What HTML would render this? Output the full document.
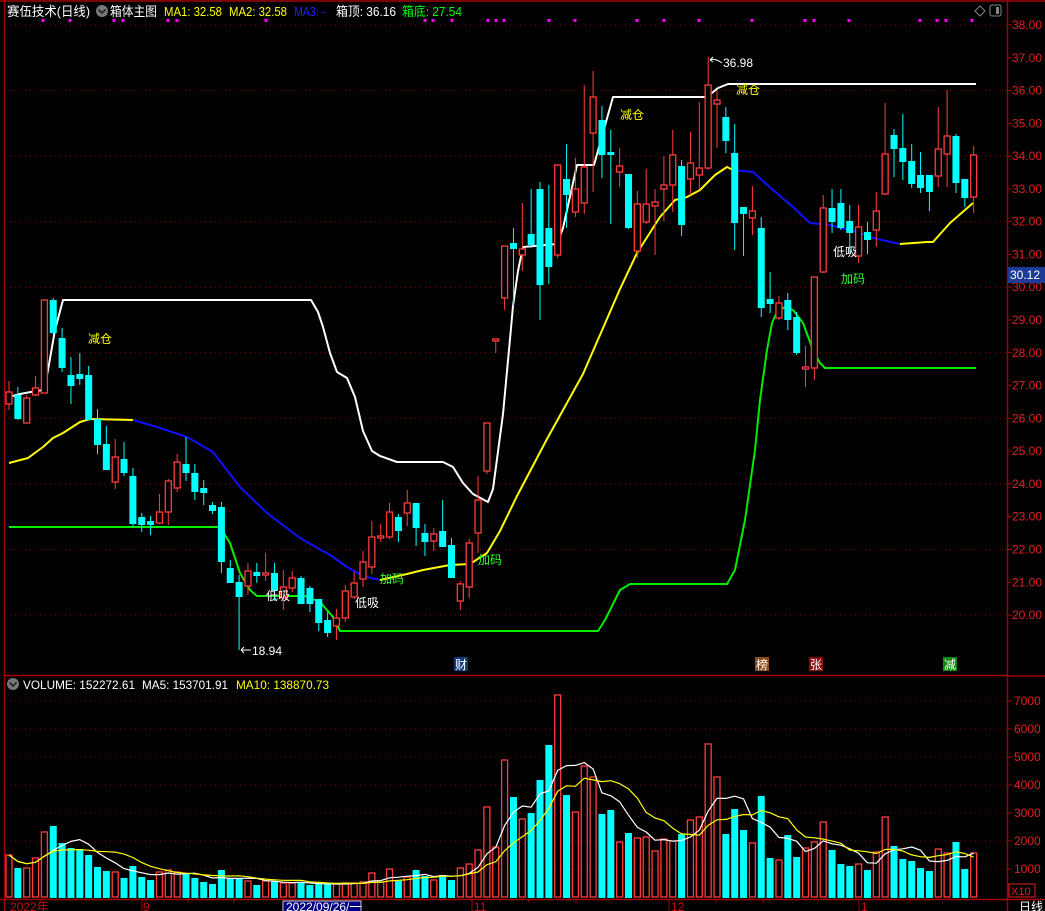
<!DOCTYPE html>
<html><head><meta charset="utf-8">
<style>
html,body{margin:0;padding:0;background:#000;width:1045px;height:911px;overflow:hidden}
svg{display:block}
text{font-family:"Liberation Sans","Noto Sans CJK SC",sans-serif}
</style></head>
<body>
<svg id="s" width="1045" height="911" viewBox="0 0 1045 911" xmlns="http://www.w3.org/2000/svg">
<rect width="1045" height="911" fill="#000"/>
<g id="grid"></g>
<g stroke="#a00000" stroke-width="1.5" fill="none">
<line x1="0" y1="1" x2="1045" y2="1"/>
<line x1="4.5" y1="0" x2="4.5" y2="911"/>
<line x1="4" y1="675.5" x2="1007" y2="675.5"/>
<line x1="1007.5" y1="0" x2="1007.5" y2="911"/>
<line x1="0" y1="899.5" x2="1045" y2="899.5"/>
<line x1="1007" y1="676" x2="1045" y2="676"/>
</g>
<g id="draw"></g>
<g font-size="13">
<text x="7" y="16" fill="#fff" textLength="83" lengthAdjust="spacingAndGlyphs">赛伍技术(日线)</text>
<circle cx="102" cy="11" r="6" fill="#777"/>
<path d="M98.5 9.5 L102 13 L105.5 9.5" stroke="#222" stroke-width="1.6" fill="none"/>
<text x="110" y="16" fill="#fff" textLength="47" lengthAdjust="spacingAndGlyphs">箱体主图</text>
<text x="164" y="16" fill="#ffff00" textLength="58" lengthAdjust="spacingAndGlyphs">MA1: 32.58</text>
<text x="229" y="16" fill="#ffff00" textLength="58" lengthAdjust="spacingAndGlyphs">MA2: 32.58</text>
<text x="294" y="16" fill="#2020ff" textLength="31" lengthAdjust="spacingAndGlyphs">MA3: -</text>
<text x="336" y="16" fill="#fff" textLength="60" lengthAdjust="spacingAndGlyphs">箱顶: 36.16</text>
<text x="402" y="16" fill="#00ff00" textLength="60" lengthAdjust="spacingAndGlyphs">箱底: 27.54</text>
</g>
<path d="M980 6 L985 11 L980 16 L975 11 Z" stroke="#888" fill="none"/>
<rect x="990" y="5" width="11" height="11" rx="2" stroke="#888" fill="none"/>
<rect x="996" y="7" width="3" height="7" fill="#888"/>
<g font-size="12">
<text x="88" y="343" fill="#ffff00">减仓</text>
<text x="620" y="119" fill="#ffff00">减仓</text>
<text x="736" y="94" fill="#ffff00">减仓</text>
<text x="266" y="600" fill="#fff">低吸</text>
<text x="355" y="607" fill="#fff">低吸</text>
<text x="833" y="256" fill="#fff">低吸</text>
<text x="380" y="583" fill="#33ff33">加码</text>
<text x="478" y="564" fill="#33ff33">加码</text>
<text x="841" y="283" fill="#33ff33">加码</text>
<text x="252" y="655" fill="#fff">18.94</text>
<text x="723" y="67" fill="#fff">36.98</text>
</g>
<g stroke="#fff" stroke-width="1" fill="none">
<path d="M241 650 H251 M241 650 L244 647 M241 650 L244 653"/>
<path d="M710 60 Q715 58 722 63 M710 60 L713 57 M710 60 L713 62"/>
</g>
<g font-size="12">
<rect x="454" y="657" width="14" height="14" fill="#123a7a"/><text x="455" y="669" fill="#fff">财</text>
<rect x="755" y="657" width="14" height="14" fill="#8b4a12"/><text x="756" y="669" fill="#fff">榜</text>
<rect x="809" y="657" width="14" height="14" fill="#8b0a0a"/><text x="810" y="669" fill="#fff">张</text>
<rect x="943" y="657" width="14" height="14" fill="#108a10"/><text x="944" y="669" fill="#fff">减</text>
</g>
<circle cx="13" cy="684" r="6" fill="#777"/>
<path d="M9.5 682.5 L13 686 L16.5 682.5" stroke="#222" stroke-width="1.6" fill="none"/>
<g font-size="12">
<text x="23" y="689" fill="#fff" textLength="112" lengthAdjust="spacingAndGlyphs">VOLUME: 152272.61</text>
<text x="142" y="689" fill="#fff" textLength="86" lengthAdjust="spacingAndGlyphs">MA5: 153701.91</text>
<text x="236" y="689" fill="#ffff00" textLength="93" lengthAdjust="spacingAndGlyphs">MA10: 138870.73</text>
</g>
<g id="axis" font-size="12" fill="#e02020"></g>
<rect x="1008" y="267" width="37" height="16" fill="#1e3c96"/>
<text x="1010" y="279" font-size="12" fill="#fff">30.12</text>
<rect x="1009" y="884" width="26" height="13" fill="none" stroke="#e02020"/>
<text x="1011" y="895" font-size="11" fill="#e02020">X10</text>
<g font-size="12" fill="#c01010">
<text x="10" y="911">2022年</text>
<text x="143" y="911">9</text>
<text x="474" y="911">11</text>
<text x="671" y="911">12</text>
<text x="861" y="911">1</text>
</g>
<rect x="283" y="901" width="78" height="11" fill="#000080" stroke="#ccc" stroke-width="1"/>
<text x="286" y="911" font-size="12" fill="#fff">2022/09/26/一</text>
<text x="1019" y="911" font-size="12" fill="#fff">日线</text>
<g stroke="#a00000"><line x1="142" y1="899" x2="142" y2="911"/><line x1="472" y1="899" x2="472" y2="911"/><line x1="669" y1="899" x2="669" y2="911"/><line x1="859" y1="899" x2="859" y2="911"/><line x1="188" y1="899" x2="188" y2="903"/><line x1="234" y1="899" x2="234" y2="903"/><line x1="529" y1="899" x2="529" y2="903"/><line x1="576" y1="899" x2="576" y2="903"/><line x1="716" y1="899" x2="716" y2="903"/><line x1="763" y1="899" x2="763" y2="903"/><line x1="910" y1="899" x2="910" y2="903"/></g>
</svg>
<script>
var NS="http://www.w3.org/2000/svg";
function el(p,t,a){var e=document.createElementNS(NS,t);for(var k in a)e.setAttribute(k,a[k]);p.appendChild(e);return e;}
var g=document.getElementById('draw'),gr=document.getElementById('grid'),ax=document.getElementById('axis');
for(var p=38;p>=20;p-=2){var y=25+(38-p)*32.78;el(gr,'line',{x1:5,y1:y,x2:1006,y2:y,stroke:'#8a0000','stroke-dasharray':'1 4'});}
for(var p=38;p>=20;p--){var y=25+(38-p)*32.78;el(ax,'line',{x1:1007,y1:y,x2:1012,y2:y,stroke:'#a00000'});var t=el(ax,'text',{x:1012,y:y+4});t.textContent=p.toFixed(2);}
for(var v=1;v<=7;v++){var y=897-v*28;el(gr,'line',{x1:5,y1:y,x2:1006,y2:y,stroke:'#8a0000','stroke-dasharray':'1 4'});el(ax,'line',{x1:1007,y1:y,x2:1012,y2:y,stroke:'#a00000'});var t=el(ax,'text',{x:1014,y:y+4});t.textContent=(v*1000);}
[43,70,114,123,168,177,266,425,433,452,488,496,504,549,575,637,664,699,752,805,814,849,920,937,946,972].forEach(function(x){el(g,'rect',{x:x-1.5,y:19,width:3,height:3,fill:'#ff00ff'});});
var C=[
['u',392,404,381,410],['d',395,418,387,420],['u',398,423,395,423],['u',388,395,376,396],['u',300,393,300,393],['d',300,332,298,335],['d',338,367,328,372],['d',375,385,357,404],['d',374,378,353,385],['d',375,419,366,420],
['d',419,444,409,454],['d',444,469,426,470],['u',457,482,439,489],['d',459,472,442,476],['d',476,523,468,527],['d',517,524,513,532],['d',521,524,516,535],['u',512,523,494,524],['u',481,512,479,525],['u',462,488,454,492],
['d',464,472,437,481],['d',473,491,464,500],['d',488,492,480,505],['d',505,510,502,514],['d',507,561,502,573],['d',568,582,560,583],['d',582,596,575,650],['u',571,586,563,595],['d',572,575,563,583],['u',573,575,553,581],
['d',573,590,563,600],['u',587,598,570,610],['u',578,588,571,592],['d',578,603,576,604],['d',588,603,586,612],['d',599,622,599,631],['d',620,632,612,637],['u',618,626,609,640],['u',591,618,585,622],['u',583,597,572,599],
['u',562,579,551,587],['u',537,567,521,574],['u',536,538,524,542],['u',512,537,503,539],['d',517,530,514,542],['u',503,513,490,526],['d',503,527,503,546],['d',533,541,524,556],['u',534,541,528,551],['d',531,546,500,546],
['d',545,577,538,578],['u',584,601,581,610],['u',543,587,539,598],['u',500,533,476,553],['u',423,471,423,474],['u',339,341,339,353],['u',246,298,246,310],['d',243,248,228,306],['u',249,255,203,271],['d',234,244,189,248],
['d',189,284,182,320],['d',228,266,185,284],['u',165,255,165,258],['d',179,194,144,228],['u',189,212,158,217],['u',167,203,85,214],['u',97,133,71,192],['d',120,154,106,178],['d',152,154,130,224],['u',166,172,148,187],
['d',174,227,174,229],['u',204,251,191,258],['u',204,222,169,224],['u',202,206,189,255],['u',185,189,156,221],['u',155,185,130,212],['d',166,224,160,236],['u',163,179,132,195],['u',168,175,102,190],['u',85,168,57,170],
['u',100,104,90,148],['d',117,140,107,153],['d',153,222,124,250],['d',207,213,207,256],['u',211,218,186,235],['d',228,307,217,317],['d',299,303,272,313],['u',303,318,296,320],['d',300,319,293,330],['d',317,352,312,355],
['u',367,369,346,387],['u',277,368,277,380],['u',208,272,195,273],['d',208,221,189,233],['d',203,227,189,230],['d',221,232,205,254],['u',227,256,205,263],['d',232,239,222,254],['u',211,230,192,247],['u',154,194,103,195],
['d',135,148,129,177],['d',148,161,114,180],['d',161,183,144,188],['d',175,187,152,193],['d',175,191,175,211],['u',149,176,107,187],['u',136,154,90,187],['d',136,182,134,193],['d',179,197,179,207],['u',155,197,146,213]];
var V=[855,868,868,858,832,826,843,848,849,855,867,871,872,878,866,877,880,872,870,872,874,878,882,884,870,878,878,881,885,881,881,883,883,883,885,884,884,884,883,883,882,873,882,869,880,877,870,876,880,
875,880,868,864,850,807,847,760,797,819,813,780,745,695,795,812,766,777,814,810,842,833,838,837,851,839,841,834,820,817,744,777,834,809,830,843,796,858,860,
835,857,848,842,822,850,864,866,864,870,852,817,846,859,861,868,871,849,853,842,869,853];
var RED='#ff3c3c',CY='#00ffff';
function X(i){return 9+8.85*i;}
function pl(pts,c,w){el(g,'polyline',{points:pts,fill:'none',stroke:c,'stroke-width':w||2,'stroke-linejoin':'round'});}
pl("9,397 20,394 36,391 44,390 48,370 55,330 63,300 311,300 318,312 323,327 330,353 337,372 347,378 355,397 363,431 372,451 380,456 397,462 443,462 453,467 463,483 473,494 488,502 493,489 503,414 510,339 513,306 518,271 523,247 557,244 563,228 577,165 594,165 613,97 707,97 718,88 728,84 976,84",'#ffffff');
pl("9,463 28,458 43,447 53,438 63,433 80,422 90,419 133,420",'#ffff00');
pl("133,420 157,427 187,437 213,452 240,487 267,513 300,538 330,555 347,567 363,576 380,580",'#1010ff');
pl("380,580 407,574 423,570 450,565 470,564 487,553 500,531 517,496 547,439 583,374 620,289 637,253 660,217 675,200 687,197 700,190 715,175 727,167 733,170",'#ffff00');
pl("733,170 753,172 773,190 793,207 810,223 830,225 857,232 873,238 900,244",'#1010ff');
pl("900,244 927,242 933,242 950,223 973,203",'#ffff00');
pl("9,527 220,527 230,543 240,573 250,590 257,596 305,596 320,602 333,617 340,631 598,631 605,620 620,590 630,584 727,584 735,570 745,520 755,450 760,400 767,350 772,323 777,312 785,307 793,310 803,323 813,350 820,363 825,368 976,368",'#00ee00');
C.forEach(function(c,i){var x=X(i),up=c[0]=='u',col=up?RED:CY;
 var bt=c[1],bb=Math.max(c[2],c[1]+1);
 if(up){el(g,'line',{x1:x,y1:c[3],x2:x,y2:bt,stroke:col});el(g,'line',{x1:x,y1:bb,x2:x,y2:c[4],stroke:col});
  el(g,'rect',{x:x-3,y:bt,width:6,height:bb-bt,fill:'#000',stroke:col,'stroke-width':1.3});}
 else{el(g,'line',{x1:x,y1:c[3],x2:x,y2:c[4],stroke:col});el(g,'rect',{x:x-3.5,y:bt,width:7,height:bb-bt+1,fill:col});}
 var vt=V[i];
 if(up)el(g,'rect',{x:x-3,y:vt,width:6,height:897-vt,fill:'none',stroke:RED,'stroke-width':1.3});
 else el(g,'rect',{x:x-3.5,y:vt,width:7,height:898-vt,fill:CY});
});
function ma(n){var pts=[];for(var i=0;i<V.length;i++){var s=0,k=0;for(var j=Math.max(0,i-n+1);j<=i;j++){s+=897-V[j];k++;}pts.push(X(i).toFixed(1)+','+(897-s/k).toFixed(1));}return pts.join(' ');}
pl(ma(5),'#ffffff',1.2);
pl(ma(10),'#ffff00',1.2);
</script>
</body></html>
